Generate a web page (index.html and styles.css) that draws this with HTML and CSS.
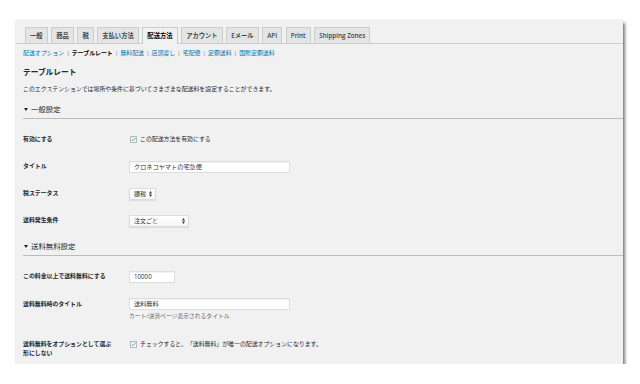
FILE: index.html
```html
<!DOCTYPE html>
<html lang="ja">
<head>
    <meta charset="UTF-8">
    <meta name="viewport" content="width=device-width, initial-scale=1.0">
    <title>テーブルレート</title>
    <link rel="stylesheet" href="styles.css">
</head>
<body>
    <div class="page">
        <div class="window">
            <nav class="tabs">
                <a class="tab">一般</a>
                <a class="tab">商品</a>
                <a class="tab">税</a>
                <a class="tab">支払い方法</a>
                <a class="tab active">配送方法</a>
                <a class="tab">アカウント</a>
                <a class="tab">Eメール</a>
                <a class="tab">API</a>
                <a class="tab">Print</a>
                <a class="tab">Shipping Zones</a>
            </nav>

            <ul class="subnav">
                <li><a>配送オプション</a><span class="sep">|</span></li>
                <li><a class="current">テーブルレート</a><span class="sep">|</span></li>
                <li><a>無料配送</a><span class="sep">|</span></li>
                <li><a>店頭渡し</a><span class="sep">|</span></li>
                <li><a>宅配便</a><span class="sep">|</span></li>
                <li><a>定額送料</a><span class="sep">|</span></li>
                <li><a>国際定額送料</a></li>
            </ul>

            <h2 class="title">テーブルレート</h2>
            <p class="intro">このエクステンションでは場所や条件に基づいてさまざまな配送料を設定することができます。</p>

            <h3 class="section"><svg class="caret" width="4" height="3" viewBox="0 0 4 3"><polygon points="0,0 4,0 2,3" fill="#222"/></svg>一般設定</h3>
            <div class="form">
                <div class="row">
                    <div class="label">有効にする</div>
                    <div class="field">
                        <span class="check"><svg width="6" height="5" viewBox="0 0 6 5"><path d="M0.8 2.6 L2.3 4 L5.3 0.8" fill="none" stroke="#1e8cbe" stroke-width="1.1"/></svg></span>
                        <span class="check-text">この配送方法を有効にする</span>
                    </div>
                </div>
                <div class="row">
                    <div class="label">タイトル</div>
                    <div class="field"><div class="input wide">クロネコヤマトの宅急便</div></div>
                </div>
                <div class="row">
                    <div class="label">税ステータス</div>
                    <div class="field">
                        <div class="select tax">課税<svg class="arrows" width="3" height="6" viewBox="0 0 3 6"><polygon points="0,2.4 1.5,0 3,2.4" fill="#333"/><polygon points="0,3.6 1.5,6 3,3.6" fill="#333"/></svg></div>
                    </div>
                </div>
                <div class="row">
                    <div class="label">送料発生条件</div>
                    <div class="field">
                        <div class="select cond">注文ごと<svg class="arrows" width="3" height="6" viewBox="0 0 3 6"><polygon points="0,2.4 1.5,0 3,2.4" fill="#333"/><polygon points="0,3.6 1.5,6 3,3.6" fill="#333"/></svg></div>
                    </div>
                </div>
            </div>

            <h3 class="section"><svg class="caret" width="4" height="3" viewBox="0 0 4 3"><polygon points="0,0 4,0 2,3" fill="#222"/></svg>送料無料設定</h3>
            <div class="form">
                <div class="row">
                    <div class="label">この料金以上で送料無料にする</div>
                    <div class="field"><div class="input small">10000</div></div>
                </div>
                <div class="row top">
                    <div class="label">送料無料時のタイトル</div>
                    <div class="field">
                        <div class="input wide">送料無料</div>
                        <p class="desc">カート/決済ページ表示されるタイトル</p>
                    </div>
                </div>
                <div class="row last">
                    <div class="label">送料無料をオプションとして選ぶ形にしない</div>
                    <div class="field">
                        <span class="check"><svg width="6" height="5" viewBox="0 0 6 5"><path d="M0.8 2.6 L2.3 4 L5.3 0.8" fill="none" stroke="#1e8cbe" stroke-width="1.1"/></svg></span>
                        <span class="check-text">チェックすると、「送料無料」が唯一の配送オプションになります。</span>
                    </div>
                </div>
            </div>
        </div>
    </div>
</body>
</html>
```

FILE: styles.css
```css
:root {
    --panel: #f1f1f1;
    --line: #cccccc;
    --link: #0073aa;
    --text: #23282d;
}

body {
    margin: 0;
    background: #fff;
    font-family: 'Open Sans', 'Noto Sans CJK JP', sans-serif;
    color: var(--text);
}

.page {
    padding: 20px 0 0 16px;
}

.window {
    box-sizing: border-box;
    width: 607px;
    height: 344px;
    background: var(--panel);
    padding: 7px 0 0 7px;
    box-shadow: 2px 3px 3px rgba(0, 0, 0, 0.5), 0 0 2px rgba(0, 0, 0, 0.12);
    overflow: hidden;
}

/* tabs */
.tabs {
    display: flex;
    align-items: flex-end;
    gap: 3.6px;
    height: 16px;
    margin-left: -7px;
    padding-left: 9px;
    border-bottom: 1px solid var(--line);
}

.tab {
    box-sizing: border-box;
    height: 16px;
    line-height: 15px;
    padding: 0 4px;
    background: #e4e4e4;
    border: 1px solid var(--line);
    border-bottom: none;
    font-size: 6.3px;
    font-weight: 600;
    color: #444;
    white-space: nowrap;
}

.tab.active {
    height: 17px;
    margin-bottom: -1px;
    background: var(--panel);
    color: #000;
}

/* sub navigation */
.subnav {
    display: flex;
    list-style: none;
    margin: 4px 0 0;
    padding: 0;
    font-size: 5.9px;
    line-height: 10px;
}

.subnav a {
    color: var(--link);
}

.subnav a.current {
    color: #000;
    font-weight: 700;
}

.subnav .sep {
    color: #666;
    padding: 0 2.2px;
}

.title {
    margin: 8px 0 0;
    font-size: 7.7px;
    line-height: 12px;
    font-weight: 700;
}

.intro {
    margin: 6px 0 0;
    font-size: 5.9px;
    line-height: 10px;
}

.section {
    display: flex;
    align-items: center;
    gap: 3px;
    margin: 10px 0 0;
    padding: 0 0 4px 1px;
    font-size: 7.4px;
    line-height: 10px;
    font-weight: 400;
    border-bottom: 1px solid #bbb;
}

.form + .section {
    margin-top: 7px;
}

.form {
    padding-top: 7px;
}

/* rows */
.row {
    display: flex;
    align-items: center;
    height: 27px;
}

.row.top {
    align-items: flex-start;
    height: auto;
    padding-top: 7.5px;
}

.row.last {
    align-items: flex-start;
    height: auto;
    padding-top: 20.5px;
}

.label {
    box-sizing: border-box;
    width: 106px;
    padding-right: 14px;
    font-size: 5.9px;
    line-height: 9px;
    font-weight: 700;
}

.row.top .label {
    line-height: 12px;
}

.field {
    display: flex;
    flex-direction: column;
}

.row .field:has(.check) {
    flex-direction: row;
    align-items: center;
    gap: 3px;
}

.row.last .field {
    height: 9px;
}

.check {
    box-sizing: border-box;
    display: flex;
    align-items: center;
    justify-content: center;
    width: 7px;
    height: 7px;
    margin-left: 1px;
    background: #fff;
    border: 1px solid #b4b9be;
    box-shadow: inset 0 1px 1px rgba(0, 0, 0, 0.1);
}

.check-text {
    font-size: 5.9px;
    line-height: 9px;
}

.input {
    box-sizing: border-box;
    height: 12px;
    line-height: 10px;
    padding: 0 4px;
    background: #fff;
    border: 1px solid #dedede;
    box-shadow: inset 0 1px 1px rgba(0, 0, 0, 0.06);
    font-size: 6.2px;
    color: #333;
}

.input.wide {
    width: 161px;
}

.input.small {
    width: 46px;
}

.desc {
    margin: 2px 0 0;
    font-size: 5.8px;
    line-height: 8px;
    color: #666;
}

.select {
    box-sizing: border-box;
    display: flex;
    align-items: center;
    justify-content: space-between;
    height: 12px;
    padding: 0 3px 0 4px;
    background: linear-gradient(#fff, #f6f6f6);
    border: 1px solid #dcdcdc;
    box-shadow: 0 1px 1px rgba(0, 0, 0, 0.08);
    font-size: 6px;
    color: #333;
}

.select.tax {
    width: 27px;
}

.select.cond {
    width: 60px;
}
```
